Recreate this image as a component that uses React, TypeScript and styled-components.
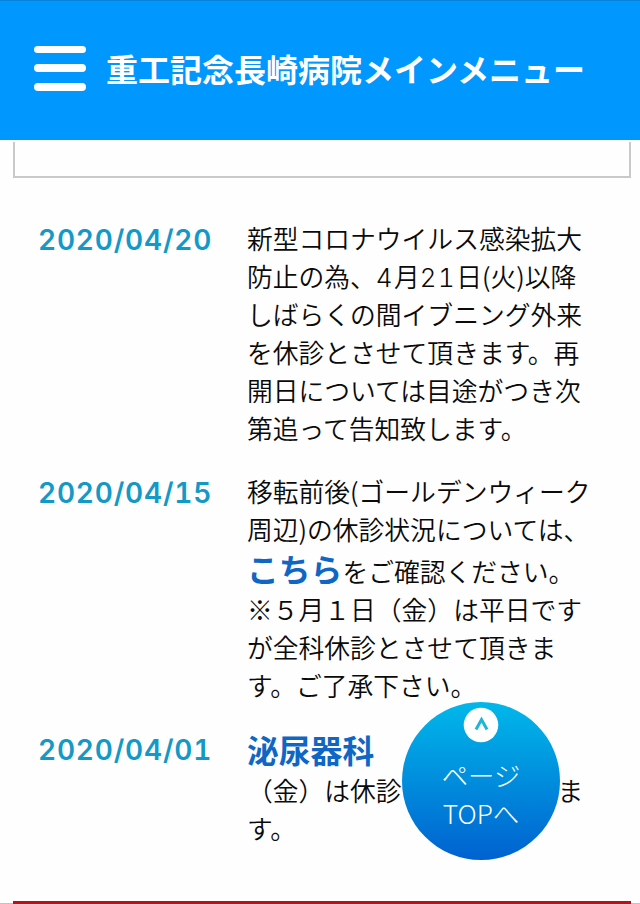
import React from "react";
import styled, { createGlobalStyle } from "styled-components";

const GlobalStyle = createGlobalStyle`
  * { box-sizing: border-box; }
  html, body { margin: 0; padding: 0; }
  body {
    background: #fff;
    color: #0a0a0a;
    font-family: "Noto Sans CJK JP", sans-serif;
    overflow: hidden;
  }
`;

const Page = styled.div`
  position: relative;
  width: 640px;
  height: 904px;
  overflow: hidden;
  background: #fefefe;
  display: flex;
  flex-direction: column;
`;

const Header = styled.header`
  flex: none;
  height: 140px;
  padding: 0 0 5px 34px;
  background: #0098ff;
  border-top: 1px solid #0883dc;
  display: flex;
  align-items: center;
`;

const MenuButton = styled.button`
  width: 52px;
  height: 45px;
  margin: 0 20px 0 0;
  padding: 0;
  border: 0;
  background: none;
  display: flex;
  flex-direction: column;
  justify-content: space-between;
`;

const Bar = styled.span`
  height: 7.6px;
  border-radius: 4px;
  background: #fff;
`;

const Title = styled.h1`
  margin: 0;
  color: #fff;
  font-size: 32px;
  line-height: 48px;
  font-weight: 700;
  white-space: nowrap;
`;

const EmptyPanel = styled.div`
  flex: none;
  height: 36px;
  margin: 2px 9px 0 13px;
  border: 2px solid #c9c9c9;
  border-top: 0;
`;

const NewsList = styled.dl`
  margin: 41px 0 0;
  padding: 0 0 0 38px;
  display: flex;
  flex-direction: column;
  gap: 25px;
`;

const NewsItem = styled.div`
  display: grid;
  grid-template-columns: 209px 1fr;
`;

const NewsDate = styled.dt`
  padding-top: 2px;
  color: #1499c6;
  font-family: Inter, sans-serif;
  font-size: 28px;
  line-height: 38px;
  font-weight: 600;
  font-variant-numeric: tabular-nums;
  letter-spacing: 0.8px;
  white-space: nowrap;
`;

const NewsBody = styled.dd`
  margin: 0;
  font-weight: 350;
`;

const Line = styled.div<{ $tall?: boolean }>`
  height: ${(p) => (p.$tall ? 42 : 38)}px;
  line-height: ${(p) => (p.$tall ? 41 : 38)}px;
  font-size: 25.78px;
  white-space: nowrap;
`;

const NewsLink = styled.a`
  color: #0f66c4;
  font-size: 31.8px;
  font-weight: 700;
`;

const Digits = styled.span`
  font-family: Inter, sans-serif;
  font-weight: 350;
  font-variant-numeric: tabular-nums;
  letter-spacing: 1.5px;
`;

const CoveredGap = styled.span`
  display: inline-block;
  width: 156px;
`;

const FooterRule = styled.div`
  margin: auto 0 0;
  height: 3px;
  display: grid;
  grid-template-columns: 13px 1fr 9px;
  align-items: end;
`;

const RuleEdge = styled.span`
  height: 1px;
  background: #c4c4c4;
`;

const RuleCenter = styled.span`
  height: 3px;
  background: #b5121b;
`;

const TopButton = styled.a`
  position: absolute;
  left: 402px;
  top: 702px;
  width: 158px;
  height: 158px;
  border-radius: 50%;
  padding-top: 5px;
  background: linear-gradient(#00b8ea, #0062d0);
  color: #fff;
  display: flex;
  flex-direction: column;
  align-items: center;
`;

const TopIcon = styled.svg`
  flex: none;
  width: 36px;
  height: 36px;
  margin-bottom: 13px;
`;

const TopLabel = styled.span`
  font-size: 26.4px;
  line-height: 38px;
  font-weight: 300;
  white-space: nowrap;
`;

export default function App() {
  return (
    <Page>
      <GlobalStyle />
      <Header>
        <MenuButton aria-label="メニュー">
          <Bar />
          <Bar />
          <Bar />
        </MenuButton>
        <Title>重工記念長崎病院メインメニュー</Title>
      </Header>
      <EmptyPanel />
      <NewsList>
        <NewsItem>
          <NewsDate>2020/04/20</NewsDate>
          <NewsBody>
            <Line>新型コロナウイルス感染拡大</Line>
            <Line>
              防止の為、<Digits>4</Digits>月<Digits>21</Digits>日(火)以降
            </Line>
            <Line>しばらくの間イブニング外来</Line>
            <Line>を休診とさせて頂きます。再</Line>
            <Line>開日については目途がつき次</Line>
            <Line>第追って告知致します。</Line>
          </NewsBody>
        </NewsItem>
        <NewsItem>
          <NewsDate>2020/04/15</NewsDate>
          <NewsBody>
            <Line>移転前後(ゴールデンウィーク</Line>
            <Line>周辺)の休診状況については、</Line>
            <Line $tall>
              <NewsLink>こちら</NewsLink>をご確認ください。
            </Line>
            <Line>※５月１日（金）は平日です</Line>
            <Line>が全科休診とさせて頂きま</Line>
            <Line>す。ご了承下さい。</Line>
          </NewsBody>
        </NewsItem>
        <NewsItem>
          <NewsDate>2020/04/01</NewsDate>
          <NewsBody>
            <Line $tall>
              <NewsLink>泌尿器科</NewsLink>
            </Line>
            <Line>
              （金）は休診
              <CoveredGap />ま
            </Line>
            <Line>す。</Line>
          </NewsBody>
        </NewsItem>
      </NewsList>
      <FooterRule>
        <RuleEdge />
        <RuleCenter />
        <RuleEdge />
      </FooterRule>
      <TopButton>
        <TopIcon viewBox="0 0 36 36">
          <circle cx="18" cy="18" r="17.3" fill="#fff" />
          <path d="M13 22.5 18.5 12.5 24 22.5" fill="none" stroke="#1db5d8" strokeWidth="3" />
        </TopIcon>
        <TopLabel>ページ</TopLabel>
        <TopLabel>TOPへ</TopLabel>
      </TopButton>
    </Page>
  );
}
